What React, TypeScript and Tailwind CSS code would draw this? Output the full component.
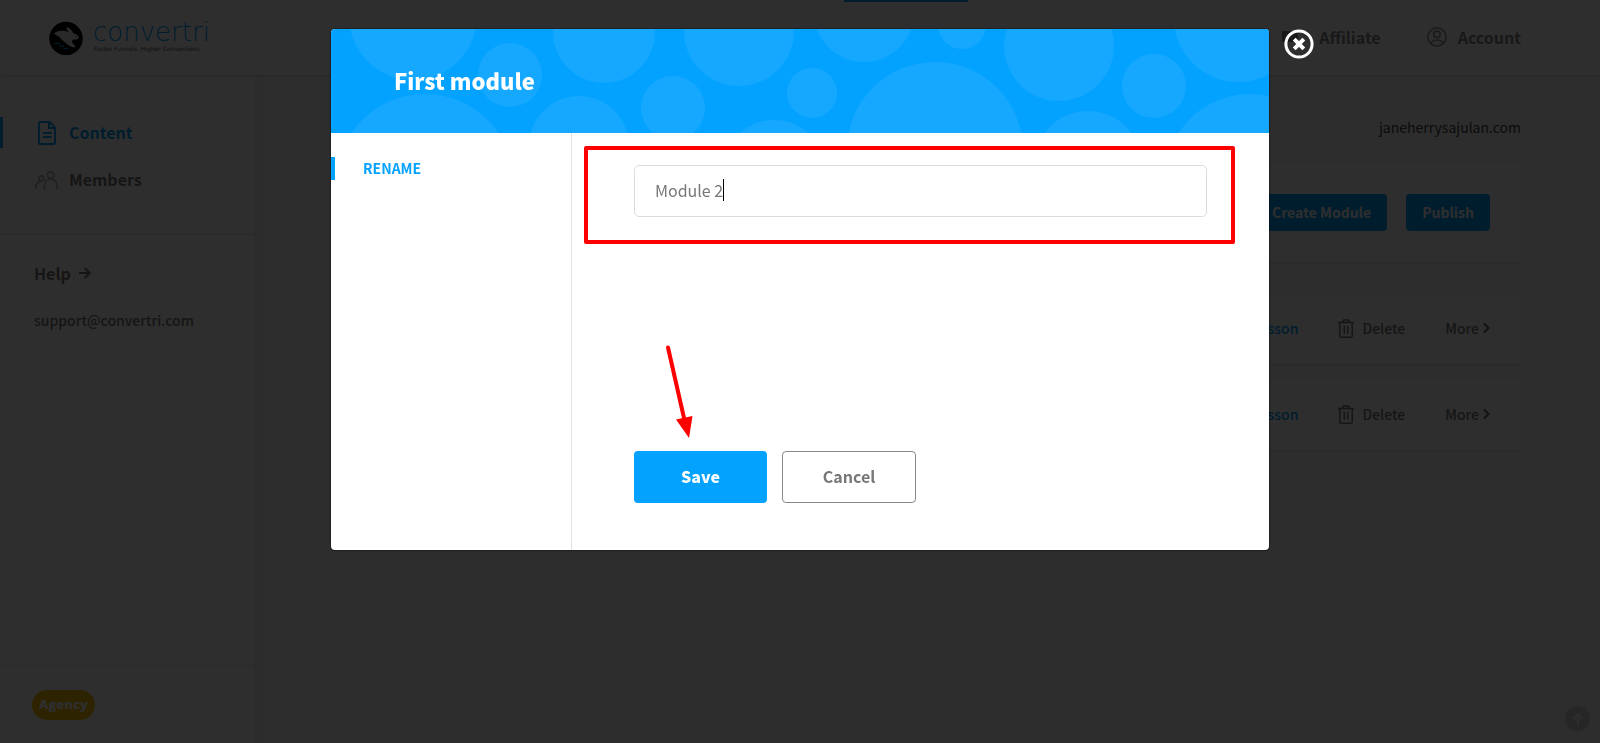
import { useState } from "react";
import type { ReactNode } from "react";

const BUBBLES = [
  [82, -13, 64],
  [179, 46, 32],
  [94, 154, 89],
  [273, 3, 51],
  [248, 117, 50],
  [342, 79, 32],
  [408, 2, 55],
  [481, 64, 25],
  [443, 143, 52],
  [533, -17, 50],
  [631, -4, 24],
  [604, 121, 88],
  [728, 17, 55],
  [823, 57, 32],
  [757, 136, 54],
  [907, -11, 64],
  [919, 150, 85],
];

const MODULES = ["First module", "Second module"];

function LogoMark() {
  return (
    <svg className="h-[34px] w-[34px]" viewBox="0 0 34 34" aria-hidden="true">
      <circle cx="17" cy="17.5" r="16.7" fill="#000" />
      <path
        d="M5 12.5C8 9.5 13 8.6 20 11.2C17.6 9 17 7.4 17.8 6.6C19.4 6 22 7.8 24.4 12.2C27 12.6 29.4 14.4 29.8 16.6C29.6 18.4 27.4 18.9 24.6 18.6C22.8 19.4 22.2 20.8 24 22.6C25.6 24 26.4 25.2 26 26.4C23 26.4 20.4 25.2 18.2 23.2C15 20.8 12 18.2 10 15.6C8.6 15 7 14 5 12.5Z"
        fill="#e4e4e4"
      />
      <circle cx="27" cy="15.6" r="0.6" fill="#000" />
      <path d="M5 22.5h6M10 24.9h5M14.4 27.4h4.4" stroke="#04a2ff" strokeWidth="1" />
    </svg>
  );
}

function DocumentIcon() {
  return (
    <svg className="h-6 w-[18px]" viewBox="0 0 18 24" fill="none" stroke="#04a2ff" strokeWidth="2" aria-hidden="true">
      <path d="M2.6 1H11.5L17 6.6V21.4Q17 23 15.4 23H2.6Q1 23 1 21.4V2.6Q1 1 2.6 1Z" />
      <path d="M11 1.4V7H16.6M5 12h8.6M5 16h8.6" />
    </svg>
  );
}

function MembersIcon() {
  return (
    <svg className="h-[18px] w-[23px]" viewBox="0 0 23 18" fill="none" stroke="#b4b4b4" strokeWidth="1.8" aria-hidden="true">
      <circle cx="15.7" cy="4" r="3.2" />
      <path d="M9.4 18V14.4C9.4 10.4 12 8 15.7 8C19.4 8 22 10.4 22 14.4V18" />
      <circle cx="6.3" cy="7.4" r="2.4" />
      <path d="M0.9 18V16C0.9 12.8 2.9 10.5 6.6 10.5" />
    </svg>
  );
}

function AccountIcon() {
  return (
    <svg className="h-5 w-5" viewBox="0 0 20 20" fill="none" stroke="#999" strokeWidth="1.7" aria-hidden="true">
      <circle cx="10" cy="10" r="9.1" />
      <circle cx="10" cy="7.4" r="3.2" />
      <path d="M4 16.6C5 13.6 7.2 13 10 13C12.8 13 15 13.6 16 16.6" />
    </svg>
  );
}

function TrashIcon() {
  return (
    <svg className="h-[19px] w-4" viewBox="0 0 16 19" fill="none" stroke="#777" strokeWidth="1.5" aria-hidden="true">
      <path d="M0 3.6H16M4.6 3.4L5.6 0.9H10.4L11.4 3.4M1.8 3.6V17Q1.8 18.2 3 18.2H13Q14.2 18.2 14.2 17V3.6M6.3 6.8V14.8M9.7 6.8V14.8" />
    </svg>
  );
}

function ChevronIcon() {
  return (
    <svg className="h-3 w-[7px]" viewBox="0 0 7 12" fill="none" stroke="#777" strokeWidth="2.4" aria-hidden="true">
      <path d="M1 1.4L5.4 6L1 10.6" />
    </svg>
  );
}

function NavLink({ icon, active, children }: { icon: ReactNode; active?: boolean; children: ReactNode }) {
  return (
    <a
      href="#"
      className={
        active
          ? "flex h-[31px] items-center border-l-[3px] border-[#04a2ff] pl-8 text-[#04a2ff]"
          : "flex h-[31px] items-center border-l-[3px] border-transparent pl-8 text-[#777]"
      }
    >
      <span className="flex w-[34px] items-center">{icon}</span>
      <span className="pb-0.5 font-semibold">{children}</span>
    </a>
  );
}

function Header() {
  return (
    <header className="relative z-10 flex h-[75px] items-center justify-between bg-white pr-[79px] pl-[49px] shadow-[0_1px_3px_rgba(0,0,0,0.15)]">
      <a href="#" className="flex items-center gap-[10px]">
        <LogoMark />
        <span className="block pb-1">
          <span className="block font-['DejaVu_Sans',sans-serif] text-[26px] leading-[26px] font-extralight text-[#04a2ff]">
            convertri
          </span>
          <span className="block pl-px font-['DejaVu_Sans',sans-serif] text-[6px] leading-[8px] text-[#555]">
            Faster Funnels, Higher Conversions
          </span>
        </span>
      </a>
      <nav className="flex items-center gap-[46px] pb-0.5 text-[#888]">
        <a href="#" className="flex items-center gap-[11px] font-semibold">
          <svg className="h-[18px] w-[26px]" viewBox="0 0 26 18" fill="#888" aria-hidden="true">
            <path d="M0 3H16V14H0Z" />
          </svg>
          Affiliate
        </a>
        <a href="#" className="flex items-center gap-[11px] font-semibold">
          <AccountIcon />
          Account
        </a>
      </nav>
      <span className="absolute top-0 left-[844px] h-[2px] w-[124px] bg-[#04a2ff]" />
    </header>
  );
}

function Sidebar() {
  return (
    <aside className="flex w-[255px] flex-col bg-white">
      <nav className="flex flex-col gap-4 border-b border-[#e2e2e2] pt-[42px] pb-[39px]">
        <NavLink active icon={<span className="pl-[3px]"><DocumentIcon /></span>}>
          Content
        </NavLink>
        <NavLink icon={<MembersIcon />}>Members</NavLink>
      </nav>
      <div className="flex flex-1 flex-col items-start gap-[23px] pt-[26px] pl-[34px] text-[#777]">
        <a href="#" className="flex items-center gap-2 font-semibold">
          Help
          <svg className="h-3 w-3" viewBox="0 0 12 12" fill="none" stroke="#777" strokeWidth="2" aria-hidden="true">
            <path d="M0 6H10.5M5.8 1L10.8 6L5.8 11" />
          </svg>
        </a>
        <a href="#" className="text-sm leading-6 font-medium">
          support@convertri.com
        </a>
      </div>
      <div className="h-[78px] border-t border-[#e8e8e8] px-8 pt-6">
        <span className="inline-flex h-[30px] items-center rounded-full bg-[#ffc000] px-[7px] pb-0.5 font-['Open_Sans',sans-serif] text-[13px] font-extrabold text-white">
          Agency
        </span>
      </div>
    </aside>
  );
}

function Main() {
  return (
    <main className="flex-1 border-l-8 border-[#efefef] bg-[#f7f7f7] pr-[79px] pl-[78px]">
      <p className="pt-10 text-right text-sm leading-6 text-[#444]">janeherrysajulan.com</p>
      <section className="mt-[25px] flex h-[98px] items-start justify-end gap-[19px] rounded bg-white pt-[30px] pr-[31px] shadow-[0_1px_3px_rgba(0,0,0,0.12)]">
        <button type="button" className="h-[37px] rounded-sm bg-[#04a2ff] px-4 pb-0.5 text-sm font-bold text-white">
          Create Module
        </button>
        <button type="button" className="h-[37px] rounded-sm bg-[#04a2ff] px-4 pb-0.5 text-sm font-bold text-white">
          Publish
        </button>
      </section>
      <ul className="mt-8 flex flex-col gap-4">
        {MODULES.map((name) => (
          <li
            key={name}
            className="flex h-[70px] items-center justify-end gap-10 rounded bg-white pr-[31px] pb-0.5 text-sm font-medium text-[#777] shadow-[0_1px_3px_rgba(0,0,0,0.12)]"
          >
            <a href="#" className="text-[#04a2ff]">
              Add Lesson
            </a>
            <button type="button" className="flex items-center gap-2">
              <TrashIcon />
              Delete
            </button>
            <button type="button" className="flex items-center gap-1">
              More
              <ChevronIcon />
            </button>
          </li>
        ))}
      </ul>
    </main>
  );
}

function RenameModal() {
  const [name, setName] = useState("Module 2");

  return (
    <div className="fixed inset-0 z-20 flex items-start justify-center bg-black/82 pt-[29px]">
      <div role="dialog" aria-label="First module" className="relative w-[938px] rounded-[4px] bg-white shadow-[0_0_2px_#000]">
        <div className="relative flex h-[104px] items-center overflow-hidden rounded-t-[4px] bg-[#04a2ff] pl-[63px]">
          <svg
            className="absolute inset-0 h-full w-full"
            viewBox="0 0 938 104"
            preserveAspectRatio="xMidYMid slice"
            fill="#16a8ff"
            aria-hidden="true"
          >
            {BUBBLES.map(([cx, cy, r]) => (
              <circle key={cx} cx={cx} cy={cy} r={r} />
            ))}
          </svg>
          <h2 className="relative pb-0.5 text-[22px] leading-8 font-black text-white">First module</h2>
        </div>

        <div className="flex">
          <div className="w-[241px] border-r border-[#e2e2e2] pt-6">
            <button
              type="button"
              className="flex h-[23px] items-center border-l-4 border-[#04a2ff] pb-0.5 pl-7 text-sm font-bold text-[#04a2ff]"
            >
              RENAME
            </button>
          </div>
          <form className="flex-1 px-[62px] pt-8 pb-[47px]" onSubmit={(e) => e.preventDefault()}>
            <div className="relative">
              <input
                aria-label="Module name"
                className="h-[52px] w-full rounded-[5px] border border-[#dcdcdc] px-5 pb-0.5 text-base font-normal text-[#777] outline-none"
                value={name}
                onChange={(e) => setName(e.target.value)}
              />
              <span className="absolute top-[14px] left-[89px] h-[22px] w-px bg-black" />
            </div>
            <div className="mt-[234px] flex gap-[15px]">
              <button type="submit" className="h-[52px] w-[133px] rounded-[4px] bg-[#04a2ff] pb-0.5 font-black text-white">
                Save
              </button>
              <button
                type="button"
                className="h-[52px] w-[134px] rounded-[4px] border border-[#888] pb-0.5 font-bold text-[#777]"
              >
                Cancel
              </button>
            </div>
          </form>
        </div>

        {/* Callouts */}
        <div className="absolute top-[117px] right-[34px] left-[253px] h-[98px] rounded-[2px] border-4 border-[#fe0000]" />
        <svg className="absolute top-[316px] left-[334px] h-[94px] w-[32px]" viewBox="0 0 32 94" aria-hidden="true">
          <path d="M3 2.5L19 73" stroke="#fe0000" strokeWidth="4" strokeLinecap="round" />
          <path d="M11 74.5L27.5 71L24 93Z" fill="#fe0000" />
        </svg>

        <button type="button" aria-label="Close" className="absolute top-0 -right-[45px]">
          <svg className="h-[30px] w-[30px]" viewBox="0 0 30 30" fill="none" stroke="#fff" aria-hidden="true">
            <circle cx="15" cy="15" r="13.1" strokeWidth="3" />
            <path d="M10.2 10.2L19.8 19.8M19.8 10.2L10.2 19.8" strokeWidth="4" />
          </svg>
        </button>
      </div>
    </div>
  );
}

export default function App() {
  return (
    <div className="flex min-h-screen flex-col font-['Noto_Sans_CJK_SC',sans-serif] text-base leading-6">
      <Header />
      <div className="flex flex-1">
        <Sidebar />
        <Main />
      </div>
      <button
        type="button"
        aria-label="Back to top"
        className="fixed right-[10px] bottom-3 flex h-[25px] w-[25px] items-center justify-center rounded-full bg-[#cfcfcf]"
      >
        <svg className="h-3 w-3" viewBox="0 0 12 12" fill="none" stroke="#f7f7f7" strokeWidth="2.4" aria-hidden="true">
          <path d="M6 12V1.5M1 6.2L6 1.3L11 6.2" />
        </svg>
      </button>
      <RenameModal />
    </div>
  );
}
